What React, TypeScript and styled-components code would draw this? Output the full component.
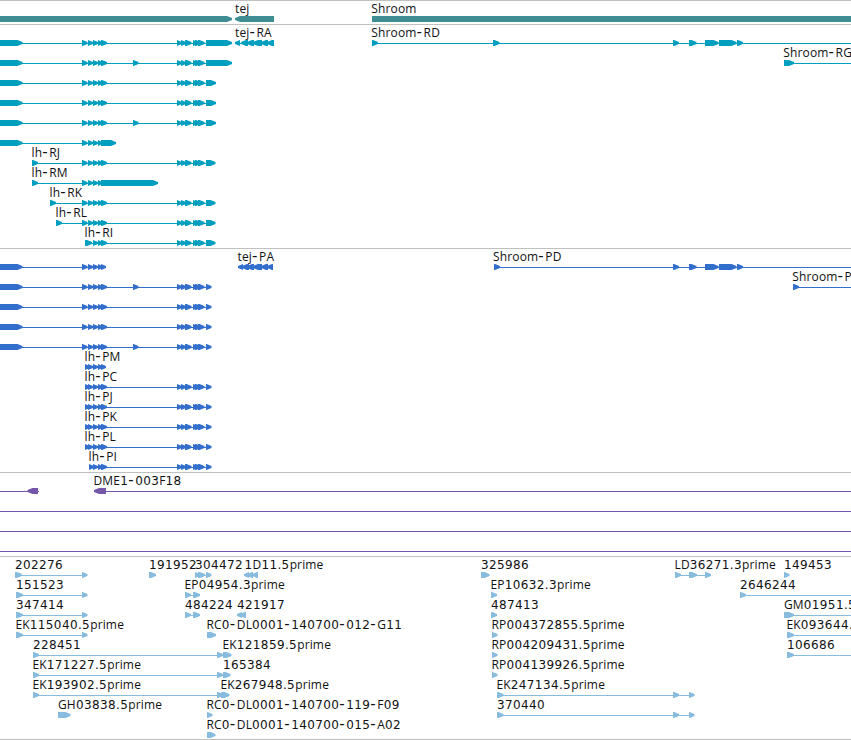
import React from "react";
import styled, { createGlobalStyle } from "styled-components";

type Span = [number, number];

interface Label {
  x: number;
  text: string;
}

interface Feature {
  spans: Span[];
  line?: Span;
  reverse?: boolean;
}

interface RowData {
  labels?: Label[];
  features: Feature[];
}

interface TrackData {
  name: string;
  color: string;
  rows: RowData[];
}

const WIDTH = 851;

const label = (x: number, text: string): Label => ({ x, text });

// forward feature, exons joined by a line unless another extent is given
const fwd = (spans: Span[], line?: Span): Feature => ({ spans, line });

const rev = (spans: Span[], line?: Span): Feature => ({ spans, line, reverse: true });

const first: Span = [-10, 22.5];
const middle: Span[] = [[82, 87.5], [88, 93], [93, 98], [98, 102.5], [101, 107]];
const middleInner: Span[] = [[85, 90], [88, 93], [93, 98], [98, 102.5], [101, 107]];
const extra: Span = [133, 138.5];
const late: Span[] = [[177, 182], [181, 186], [185, 191.5], [193, 198], [195, 201], [198, 204.5]];
const shroomExons: Span[] = [[673, 679], [689, 696.5], [705, 718.5], [719, 736.5], [737, 743]];

const transcript = (start: Span[], end: Span[], last: Span): Feature =>
  fwd([...start, ...end, ...late, last]);

const tracks: TrackData[] = [
  {
    name: "gene",
    color: "#3f8e94",
    rows: [
      {
        labels: [label(235, "tej"), label(371.3, "Shroom")],
        features: [fwd([[-10, 232]]), rev([[235, 274]]), fwd([[372, 870]])],
      },
    ],
  },
  {
    name: "transcript",
    color: "#009fc0",
    rows: [
      {
        labels: [label(235, "tej-RA"), label(371.3, "Shroom-RD")],
        features: [
          transcript([first], middle, [206, 232]),
          rev([[235, 240], [241, 248], [247, 254], [253, 262], [261, 268], [267, 274]]),
          fwd([[372, 378], [493, 499.5], ...shroomExons], [372, 851]),
        ],
      },
      {
        labels: [label(783.3, "Shroom-RG")],
        features: [
          transcript([first], [...middle, extra], [206, 232]),
          fwd([[784, 794]], [784, 851]),
        ],
      },
      { features: [transcript([first], middle, [206, 216])] },
      { features: [transcript([first], middle, [206, 216])] },
      { features: [transcript([first], [...middle, extra], [206, 216])] },
      { features: [fwd([first, ...middle.slice(0, 4), [101, 116]])] },
      {
        labels: [label(31.5, "lh-RJ")],
        features: [transcript([[32, 38]], middle, [206, 215.5])],
      },
      {
        labels: [label(31.5, "lh-RM")],
        features: [fwd([[32, 38], ...middle.slice(0, 4), [101, 158]])],
      },
      {
        labels: [label(49.5, "lh-RK")],
        features: [transcript([[50, 56]], middle, [206, 215.5])],
      },
      {
        labels: [label(55.5, "lh-RL")],
        features: [transcript([[56, 62]], middle, [206, 215.5])],
      },
      {
        labels: [label(84.5, "lh-RI")],
        features: [transcript([], [[85, 92], ...middle.slice(2)], [206, 215.5])],
      },
    ],
  },
  {
    name: "protein",
    color: "#326ecc",
    rows: [
      {
        labels: [label(237.5, "tej-PA"), label(493, "Shroom-PD")],
        features: [
          fwd([first, ...middle.slice(0, 4), [101, 106]]),
          rev([[238, 243], [242, 249], [247, 254], [253, 262], [261, 268], [267, 273]]),
          fwd([[494, 500], ...shroomExons], [494, 851]),
        ],
      },
      {
        labels: [label(792.3, "Shroom-PG")],
        features: [
          transcript([first], [...middle, extra], [206, 211.5]),
          fwd([[793, 799]], [793, 851]),
        ],
      },
      { features: [transcript([first], middle, [206, 211.5])] },
      { features: [transcript([first], middle, [206, 211.5])] },
      { features: [transcript([first], [...middle, extra], [206, 211.5])] },
      {
        labels: [label(84.5, "lh-PM")],
        features: [fwd([...middleInner.slice(0, 4), [101, 106]])],
      },
      ...["lh-PC", "lh-PJ", "lh-PK", "lh-PL"].map((text) => ({
        labels: [label(84.5, text)],
        features: [transcript([], middleInner, [206, 211.5])],
      })),
      {
        labels: [label(88.5, "lh-PI")],
        features: [transcript([], [[89, 94], ...middle.slice(2)], [206, 211.5])],
      },
    ],
  },
  {
    name: "bac",
    color: "#7457a8",
    rows: [
      {
        labels: [label(93.5, "DME1-003F18")],
        features: [rev([[27.5, 38]], [0, 39]), rev([[94, 106]], [94, 851])],
      },
      { features: [fwd([], [0, 851])] },
      { features: [fwd([], [0, 851])] },
      { features: [fwd([], [0, 851])] },
    ],
  },
  {
    name: "est",
    color: "#87bcdf",
    rows: [
      {
        labels: [
          label(15, "202276"),
          label(149, "191952"),
          label(195, "304472"),
          label(244.5, "1D11.5prime"),
          label(481, "325986"),
          label(674.5, "LD36271.3prime"),
          label(784, "149453"),
        ],
        features: [
          fwd([[15, 22], [82, 87.5]]),
          fwd([[149, 156]]),
          fwd([[195, 200], [198, 205], [206, 211.5]]),
          rev([[244, 249], [247, 253], [252, 258]]),
          fwd([[481, 489.5]]),
          fwd([[675, 681], [689, 697], [705, 711]]),
          fwd([[784, 789.5]]),
        ],
      },
      {
        labels: [label(16, "151523"), label(184.5, "EP04954.3prime"), label(490.5, "EP10632.3prime"), label(740, "2646244")],
        features: [
          fwd([[16, 23], [82, 87.5]]),
          fwd([[185, 191], [193, 200]]),
          fwd([[491, 497]]),
          fwd([[740, 746]], [740, 851]),
        ],
      },
      {
        labels: [label(16, "347414"), label(185, "484224"), label(237, "421917"), label(491, "487413"), label(784, "GM01951.5prime")],
        features: [
          fwd([[16, 23], [82, 87.5]]),
          fwd([[185, 191], [193, 200]]),
          rev([[237, 242], [240, 246]]),
          fwd([[491, 497]]),
          fwd([[784, 794]], [784, 851]),
        ],
      },
      {
        labels: [label(15.5, "EK115040.5prime"), label(206.5, "RC0-DL0001-140700-012-G11"), label(491.5, "RP004372855.5prime"), label(786.5, "EK093644.5prime")],
        features: [
          fwd([[16, 23], [82, 87.5]]),
          fwd([[207, 216]]),
          fwd([[492, 497.5]]),
          fwd([[787, 794]], [787, 851]),
        ],
      },
      {
        labels: [label(33, "228451"), label(222.5, "EK121859.5prime"), label(491.5, "RP004209431.5prime"), label(787, "106686")],
        features: [
          fwd([[33, 39], [217, 223], [223, 231.5]]),
          fwd([[492, 497.5]]),
          fwd([[787, 794]], [787, 851]),
        ],
      },
      {
        labels: [label(32.5, "EK171227.5prime"), label(223, "165384"), label(491.5, "RP004139926.5prime")],
        features: [fwd([[33, 39], [217, 223], [223, 230.5]]), fwd([[492, 497.5]])],
      },
      {
        labels: [label(32.5, "EK193902.5prime"), label(220.5, "EK267948.5prime"), label(496.5, "EK247134.5prime")],
        features: [
          fwd([[33, 39], [217, 223], [221, 229.5]]),
          fwd([[497, 503.5], [673, 679], [689, 694.5]]),
        ],
      },
      {
        labels: [label(58, "GH03838.5prime"), label(206.5, "RC0-DL0001-140700-119-F09"), label(497, "370440")],
        features: [
          fwd([[58, 70.5]]),
          fwd([[207, 212.5]]),
          fwd([[497, 503.5], [673, 679], [689, 694.5]]),
        ],
      },
      {
        labels: [label(206.5, "RC0-DL0001-140700-015-A02")],
        features: [fwd([[207, 215.5]])],
      },
    ],
  },
];

const HEAD = 5;

const arrow = ([x0, x1]: Span, reverse?: boolean) => {
  if (reverse) {
    const neck = Math.min(x1, x0 + HEAD);
    return `M${x1} 12H${neck}L${x0} 14V16L${neck} 18H${x1}Z`;
  }
  const neck = Math.max(x0, x1 - HEAD);
  return `M${x0} 12H${neck}L${x1} 14V16L${neck} 18H${x0}Z`;
};

const FeatureGlyph: React.FC<{ feature: Feature }> = ({ feature }) => {
  const { spans, reverse } = feature;
  const line = feature.line || [spans[0][0], spans[spans.length - 1][1] - 2];
  const joined = feature.line || spans.length > 1;

  return (
    <g>
      {joined ? <rect x={line[0]} y={15} width={line[1] - line[0]} height={1} /> : null}
      {spans.map((span, i) => (
        <path key={i} d={arrow(span, reverse)} />
      ))}
    </g>
  );
};

const FeatureLabel: React.FC<Label> = ({ x, text }) => {
  const runs = text.split(/([\d.]+|-)/).filter(Boolean);

  return (
    <LabelText x={x} y={9}>
      {runs.map((run, i) => {
        if (run === "-") return <Dash key={i}>{run}</Dash>;
        return /\d/.test(run)
          ? <Digits key={i}>{run}</Digits>
          : <tspan key={i}>{run}</tspan>;
      })}
    </LabelText>
  );
};

const App: React.FC = () => {
  return (
    <Browser>
      <GlobalStyle />
      {tracks.map((track) => (
        <Track key={track.name}>
          {track.rows.map((row, i) => (
            <RowSvg key={i} $color={track.color} viewBox={`0 0 ${WIDTH} 20`}>
              {row.features.map((feature, n) => (
                <FeatureGlyph key={n} feature={feature} />
              ))}
              {(row.labels || []).map((item) => (
                <FeatureLabel key={item.text} {...item} />
              ))}
            </RowSvg>
          ))}
        </Track>
      ))}
      <BottomRule />
    </Browser>
  );
};

const GlobalStyle = createGlobalStyle`
  body {
    background: #fff;
    margin: 0;
    overflow: hidden;
  }
`;

const Browser = styled.main`
  display: flex;
  flex-direction: column;
  height: 740px;
  overflow: hidden;
  width: ${WIDTH}px;
`;

const Track = styled.section`
  border-top: 1px solid #c0c0c0;
  display: flex;
  flex-direction: column;
  flex-shrink: 0;
  padding-top: 3px;
`;

const RowSvg = styled.svg<{ $color: string }>`
  display: block;
  fill: ${(p) => p.$color};
  height: 20px;
  overflow: visible;
  width: ${WIDTH}px;
`;

const LabelText = styled.text`
  fill: #111;
  font-family: "Open Sans", sans-serif;
  font-size: 12px;
  letter-spacing: 0.15px;
`;

const Digits = styled.tspan`
  font-family: "DejaVu Sans", sans-serif;
  letter-spacing: 0.38px;
`;

const Dash = styled.tspan`
  font-family: "DejaVu Sans", sans-serif;
  font-size: 15px;
  letter-spacing: 1.6px;
`;

const BottomRule = styled.div`
  background: #c0c0c0;
  flex-shrink: 0;
  height: 1px;
  margin-top: -1px;
`;

export default App;
